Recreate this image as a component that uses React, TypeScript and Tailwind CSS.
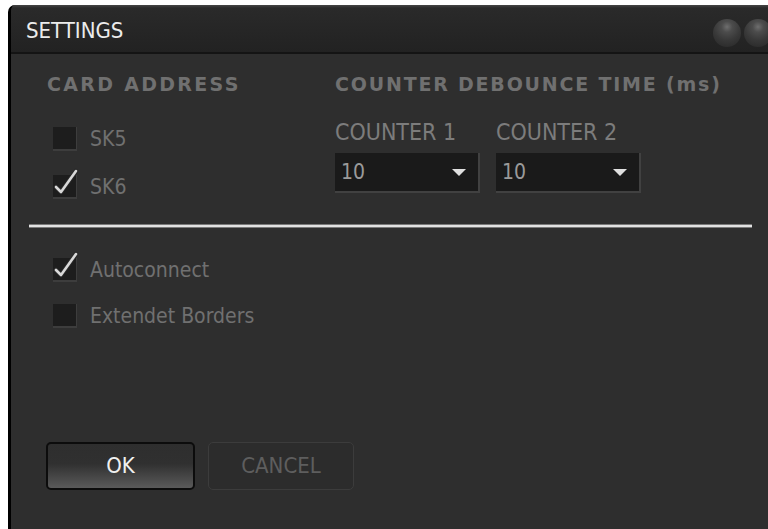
import React from "react";

const narrow = { fontFamily: "'Liberation Sans Narrow', 'DejaVu Sans Condensed', 'Liberation Sans', sans-serif" };
const heading = { fontFamily: "'DejaVu Sans', sans-serif" };

function Check() {
  return (
    <svg width="30" height="30" viewBox="0 0 30 30" className="absolute -left-[2px] -top-[8px]">
      <path d="M5 20 L10 25 L25 4" fill="none" stroke="#2a2a2a" strokeWidth="4.5" strokeLinecap="round" strokeLinejoin="round" />
      <path d="M5 20 L10 25 L25 4" fill="none" stroke="#d8d8d8" strokeWidth="2.6" strokeLinecap="round" strokeLinejoin="round" />
    </svg>
  );
}

function Box({ checked, label }: { checked?: boolean; label: string }) {
  return (
    <div className="flex items-center h-[24px]">
      <div className="relative w-[24px] h-[24px] bg-[#1d1d1d] border-b-2 border-r border-[#3d3d3d]">
        {checked && <Check />}
      </div>
      <span className="ml-[13px] text-[21px] text-[#707070] leading-none" style={narrow}>
        {label}
      </span>
    </div>
  );
}

function Select({ value }: { value: string }) {
  return (
    <div className="w-[145px] h-[40px] bg-[#1a1a1a] border-r-2 border-b-2 border-[#414141] flex items-center pl-[6px] pr-[12px]">
      <span className="text-[21px] text-[#9a9a9a] leading-none" style={narrow}>{value}</span>
      <div className="ml-auto w-0 h-0 border-l-[7px] border-r-[7px] border-t-[7px] border-l-transparent border-r-transparent border-t-[#e0e0e0]" />
    </div>
  );
}

function Knob() {
  return (
    <div className="w-[28px] h-[28px] rounded-full bg-[radial-gradient(circle_at_50%_28%,#6e6e6e_0%,#4c4c4c_22%,#383838_55%,#262626_100%)]" />
  );
}

export default function App() {
  return (
    <div className="w-[768px] h-[529px] bg-white pt-[5px] pl-[8px] overflow-hidden">
      <div className="h-full flex flex-col bg-[#2e2e2e] border-l-[3px] border-black rounded-tl-[7px] overflow-hidden">
        <div className="h-[49px] shrink-0 flex items-center bg-[linear-gradient(#454545_0px,#2a2a2a_3px,#222222_100%)] border-b-2 border-[#141414]">
          <span className="ml-[15px] mt-[5px] text-[22px] text-[#ececec] leading-none" style={narrow}>SETTINGS</span>
          <div className="ml-auto mt-[8px] flex gap-[3px] mr-[-4px]">
            <Knob />
            <Knob />
          </div>
        </div>
        <div className="flex pl-[36px]">
          <div className="w-[288px] flex flex-col">
            <div className="mt-[19px] h-[22px] flex items-center text-[19px] font-bold tracking-[2.3px] text-[#707070]" style={heading}>
              CARD ADDRESS
            </div>
            <div className="mt-[32px] pl-[6px]">
              <Box label="SK5" />
            </div>
            <div className="mt-[24px] pl-[6px]">
              <Box label="SK6" checked />
            </div>
          </div>
          <div className="flex flex-col">
            <div className="mt-[19px] h-[22px] flex items-center text-[19px] font-bold tracking-[1.8px] text-[#707070] whitespace-nowrap" style={heading}>
              COUNTER DEBOUNCE TIME (ms)
            </div>
            <div className="flex gap-[16px]">
              <div className="flex flex-col">
                <div className="mt-[26px] h-[22px] flex items-center text-[23px] text-[#7c7c7c] leading-none" style={narrow}>COUNTER 1</div>
                <div className="mt-[10px]"><Select value="10" /></div>
              </div>
              <div className="flex flex-col">
                <div className="mt-[26px] h-[22px] flex items-center text-[23px] text-[#7c7c7c] leading-none" style={narrow}>COUNTER 2</div>
                <div className="mt-[10px]"><Select value="10" /></div>
              </div>
            </div>
          </div>
        </div>
        <div className="mt-[25px] ml-[18px] w-[723px] h-[4px] shrink-0 rounded-[1px] bg-[#e2e2e2] border-y border-[#7a7a7a]" />
        <div className="pl-[42px] flex flex-col">
          <div className="mt-[30px]"><Box label="Autoconnect" checked /></div>
          <div className="mt-[22px]"><Box label="Extendet Borders" /></div>
        </div>
        <div className="mt-[114px] pl-[35px] flex gap-[13px]">
          <button className="w-[149px] h-[48px] rounded-[5px] border-2 border-[#0c0c0c] bg-[linear-gradient(#2e2e2e_0%,#303030_45%,#5a5a5a_100%)] text-[#f0f0f0] text-[22px] leading-none" style={narrow}>
            OK
          </button>
          <button className="w-[146px] h-[48px] rounded-[5px] border border-[#3c3c3c] bg-[#2c2c2c] text-[#5e5e5e] text-[22px] leading-none" style={narrow}>
            CANCEL
          </button>
        </div>
      </div>
    </div>
  );
}
